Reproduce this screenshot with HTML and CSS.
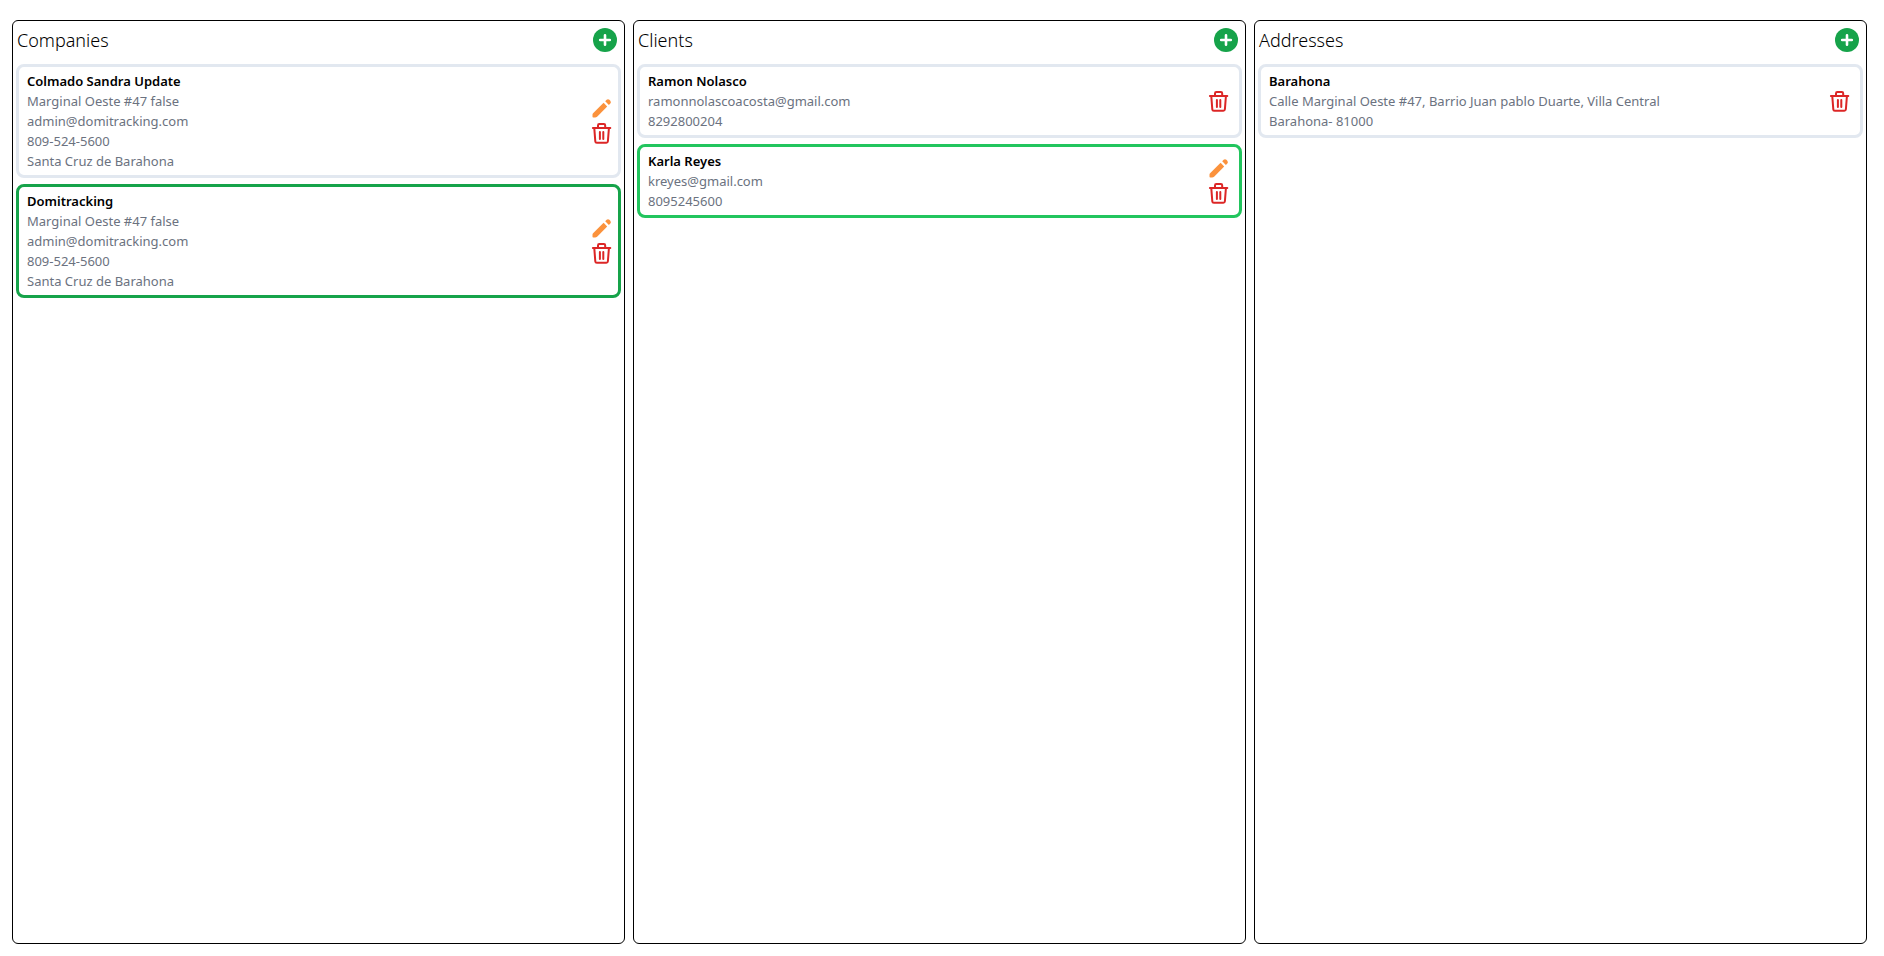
FILE: index.html
```html
<!DOCTYPE html>
<html lang="en">
<head>
<meta charset="utf-8">
<meta name="viewport" content="width=device-width, initial-scale=1">
<title>Companies</title>
<link rel="stylesheet" href="styles.css">
</head>
<body>
<svg class="sprite" aria-hidden="true">
  <symbol id="plus" viewBox="0 0 24 24">
    <circle cx="12" cy="12" r="12" fill="#16a34a"/>
    <path d="M12 7.2v9.6M7.2 12h9.6" stroke="#fff" stroke-width="2.6" stroke-linecap="round"/>
  </symbol>
  <symbol id="pencil" viewBox="0 0 24 24">
    <path d="M13.6 5.8l3.6 3.6L7.1 19.7q-.9.8-2 .8H3.3q-.8 0-.8-.8v-1.9q0-1 .8-1.8z" fill="#fb923c"/>
    <path d="M15.2 4.2l1.4-1.4q1.4-1.2 2.8 0l.9.9q1.3 1.4 0 2.8l-1.4 1.4z" fill="#fb923c"/>
  </symbol>
  <symbol id="trash" viewBox="0 0 24 24">
    <path d="M2.9 7h17.4M8 6.7V4.4q0-1.3 1.3-1.3h4.6q1.3 0 1.3 1.3v2.3M4.3 7.3l1 13q.1 1.5 1.6 1.5h9.4q1.5 0 1.6-1.5l1-13M9.9 11v7M13.3 11v7" fill="none" stroke="#dc2626" stroke-width="2" stroke-linecap="round" stroke-linejoin="round"/>
  </symbol>
</svg>
<main class="board">
  <section class="column">
    <header class="column-head">
      <h2>Companies</h2>
      <button type="button" aria-label="Add company"><svg class="icon"><use href="#plus"/></svg></button>
    </header>
    <article class="card">
      <div class="info">
        <h3>Colmado Sandra Update</h3>
        <p>Marginal Oeste #47 false</p>
        <p>admin@domitracking.com</p>
        <p>809-524-5600</p>
        <p>Santa Cruz de Barahona</p>
      </div>
      <div class="actions">
        <button type="button" aria-label="Edit"><svg class="icon"><use href="#pencil"/></svg></button>
        <button type="button" aria-label="Delete"><svg class="icon"><use href="#trash"/></svg></button>
      </div>
    </article>
    <article class="card company-selected">
      <div class="info">
        <h3>Domitracking</h3>
        <p>Marginal Oeste #47 false</p>
        <p>admin@domitracking.com</p>
        <p>809-524-5600</p>
        <p>Santa Cruz de Barahona</p>
      </div>
      <div class="actions">
        <button type="button" aria-label="Edit"><svg class="icon"><use href="#pencil"/></svg></button>
        <button type="button" aria-label="Delete"><svg class="icon"><use href="#trash"/></svg></button>
      </div>
    </article>
  </section>
  <section class="column inset-actions">
    <header class="column-head">
      <h2>Clients</h2>
      <button type="button" aria-label="Add client"><svg class="icon"><use href="#plus"/></svg></button>
    </header>
    <article class="card">
      <div class="info">
        <h3>Ramon Nolasco</h3>
        <p>ramonnolascoacosta@gmail.com</p>
        <p>8292800204</p>
      </div>
      <div class="actions">
        <button type="button" aria-label="Delete"><svg class="icon"><use href="#trash"/></svg></button>
      </div>
    </article>
    <article class="card client-selected">
      <div class="info">
        <h3>Karla Reyes</h3>
        <p>kreyes@gmail.com</p>
        <p>8095245600</p>
      </div>
      <div class="actions">
        <button type="button" aria-label="Edit"><svg class="icon"><use href="#pencil"/></svg></button>
        <button type="button" aria-label="Delete"><svg class="icon"><use href="#trash"/></svg></button>
      </div>
    </article>
  </section>
  <section class="column inset-actions">
    <header class="column-head">
      <h2>Addresses</h2>
      <button type="button" aria-label="Add address"><svg class="icon"><use href="#plus"/></svg></button>
    </header>
    <article class="card">
      <div class="info">
        <h3>Barahona</h3>
        <p>Calle Marginal Oeste #47, Barrio Juan pablo Duarte, Villa Central</p>
        <p>Barahona- 81000</p>
      </div>
      <div class="actions">
        <button type="button" aria-label="Delete"><svg class="icon"><use href="#trash"/></svg></button>
      </div>
    </article>
  </section>
</main>
</body>
</html>
```
FILE: styles.css
```css
* {
  box-sizing: border-box;
}

body {
  margin: 0;
  background: #fff;
  color: #000;
  font: 13px/20px "Noto Sans", "Open Sans", sans-serif;
}

h2, h3, p {
  margin: 0;
}

button {
  display: block;
  padding: 0;
  border: 0;
  background: none;
  cursor: pointer;
}

.sprite {
  display: none;
}

.icon {
  display: block;
  width: 24px;
  height: 24px;
}

.board {
  display: grid;
  grid-template-columns: repeat(3, minmax(0, 1fr));
  gap: 8px;
  min-height: 100vh;
  padding: 20px 17px 12px 12px;
}

.column {
  display: flex;
  flex-direction: column;
  gap: 6px;
  padding: 3px;
  border: 1px solid #000;
  border-radius: 6px;
}

.column-head {
  display: flex;
  align-items: center;
  justify-content: space-between;
  height: 34px;
  padding: 0 4px 2px 1px;
}

.column-head h2 {
  font-size: 18px;
  font-weight: 300;
  line-height: 28px;
}

.card {
  display: flex;
  align-items: center;
  justify-content: space-between;
  padding: 4px 4px 4px 8px;
  border: 3px solid #e2e8f0;
  border-radius: 8px;
}

.inset-actions .card {
  padding-right: 8px;
}

.company-selected {
  border-color: #16a34a;
}

.client-selected {
  border-color: #22c55e;
}

.info h3 {
  font-size: 13px;
  font-weight: 600;
}

.info p {
  color: #6b7280;
}
```
